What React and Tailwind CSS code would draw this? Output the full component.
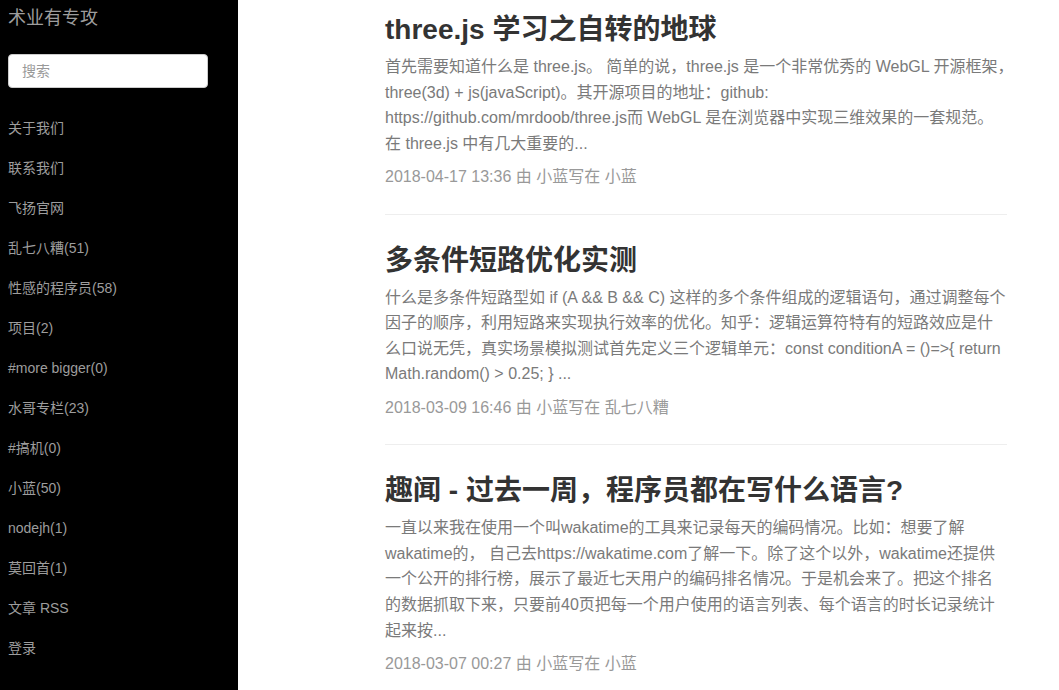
import React from "react";

const nav = [
  "关于我们",
  "联系我们",
  "飞扬官网",
  "乱七八糟(51)",
  "性感的程序员(58)",
  "项目(2)",
  "#more bigger(0)",
  "水哥专栏(23)",
  "#搞机(0)",
  "小蓝(50)",
  "nodejh(1)",
  "莫回首(1)",
  "文章 RSS",
  "登录",
];

const posts = [
  {
    title: "three.js 学习之自转的地球",
    lines: [
      "首先需要知道什么是 three.js。 简单的说，three.js 是一个非常优秀的 WebGL 开源框架，",
      "three(3d) + js(javaScript)。其开源项目的地址：github:",
      "https://github.com/mrdoob/three.js而 WebGL 是在浏览器中实现三维效果的一套规范。",
      "在 three.js 中有几大重要的...",
    ],
    meta: "2018-04-17 13:36 由 小蓝写在 小蓝",
  },
  {
    title: "多条件短路优化实测",
    lines: [
      "什么是多条件短路型如 if (A && B && C) 这样的多个条件组成的逻辑语句，通过调整每个",
      "因子的顺序，利用短路来实现执行效率的优化。知乎：逻辑运算符特有的短路效应是什",
      "么口说无凭，真实场景模拟测试首先定义三个逻辑单元：const conditionA = ()=>{ return",
      "Math.random() > 0.25; } ...",
    ],
    meta: "2018-03-09 16:46 由 小蓝写在 乱七八糟",
  },
  {
    title: "趣闻 - 过去一周，程序员都在写什么语言?",
    lines: [
      "一直以来我在使用一个叫wakatime的工具来记录每天的编码情况。比如：想要了解",
      "wakatime的， 自己去https://wakatime.com了解一下。除了这个以外，wakatime还提供",
      "一个公开的排行榜，展示了最近七天用户的编码排名情况。于是机会来了。把这个排名",
      "的数据抓取下来，只要前40页把每一个用户使用的语言列表、每个语言的时长记录统计",
      "起来按...",
    ],
    meta: "2018-03-07 00:27 由 小蓝写在 小蓝",
  },
];

export default function App() {
  return (
    <div
      className="flex min-h-screen bg-white"
      style={{ fontFamily: '"Liberation Sans", "Noto Sans CJK SC", Arial, sans-serif' }}
    >
      <aside className="w-[238px] shrink-0 bg-black px-[8px]">
        <div className="pt-[6px] text-[18px] leading-[24px] text-[#9d9d9d]">术业有专攻</div>
        <div className="mt-[24px]">
          <input
            type="text"
            placeholder="搜索"
            className="block h-[34px] w-[200px] rounded-[4px] border border-[#ccc] bg-white px-[13px] text-[14px] text-[#555] placeholder:text-[#999] outline-none"
          />
        </div>
        <nav className="mt-[20px] flex flex-col">
          {nav.map((n) => (
            <a key={n} className="block py-[10px] text-[14px] leading-[20px] text-[#9d9d9d]">
              {n}
            </a>
          ))}
        </nav>
      </aside>
      <main className="flex-1">
        <div className="ml-[147px] w-[622px]">
          {posts.map((p, i) => (
            <div key={i}>
              {i > 0 && <div className="h-px bg-[#eee]" />}
              <div className={i === 0 ? "pt-[12px] pb-[24px]" : "pt-[28px] pb-[24px]"}>
                <h2 className="text-[28px] font-bold leading-[36px] text-[#333] whitespace-nowrap">
                  {p.title}
                </h2>
                <p className="mt-[6px] text-[16px] leading-[25.6px] text-[#7a7a7a]">
                  {p.lines.map((l, j) => (
                    <span key={j} className="block whitespace-nowrap">
                      {l}
                    </span>
                  ))}
                </p>
                <div className="mt-[7.6px] text-[16px] leading-[25.6px] text-[#999]">{p.meta}</div>
              </div>
            </div>
          ))}
        </div>
      </main>
    </div>
  );
}
